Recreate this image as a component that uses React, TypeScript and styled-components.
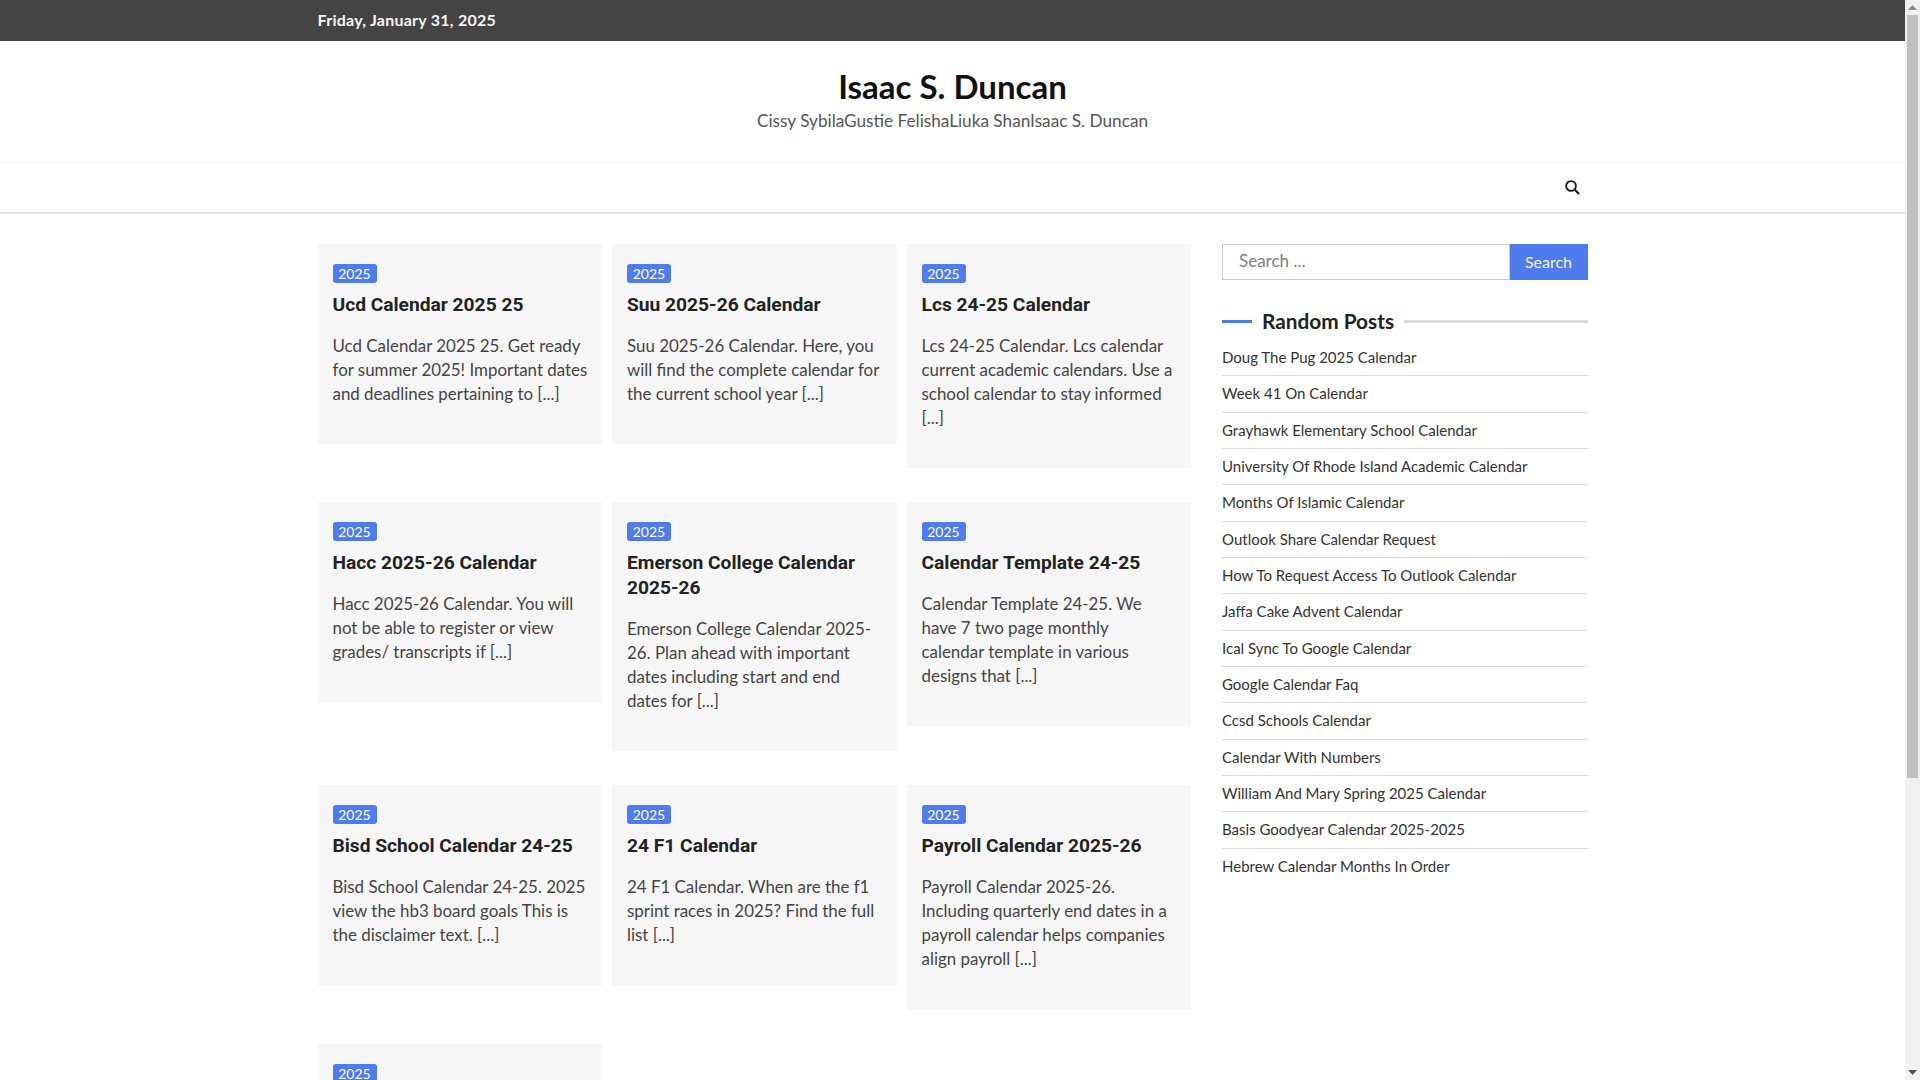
import styled, { createGlobalStyle } from "styled-components";

const posts = [
	{ title: "Ucd Calendar 2025 25", text: "Ucd Calendar 2025 25. Get ready\nfor summer 2025! Important dates\nand deadlines pertaining to [...]" },
	{ title: "Suu 2025-26 Calendar", text: "Suu 2025-26 Calendar. Here, you\nwill find the complete calendar for\nthe current school year [...]" },
	{ title: "Lcs 24-25 Calendar", text: "Lcs 24-25 Calendar. Lcs calendar\ncurrent academic calendars. Use a\nschool calendar to stay informed\n[...]" },
	{ title: "Hacc 2025-26 Calendar", text: "Hacc 2025-26 Calendar. You will\nnot be able to register or view\ngrades/ transcripts if [...]" },
	{ title: "Emerson College Calendar 2025-26", text: "Emerson College Calendar 2025-\n26. Plan ahead with important\ndates including start and end\ndates for [...]" },
	{ title: "Calendar Template 24-25", text: "Calendar Template 24-25. We\nhave 7 two page monthly\ncalendar template in various\ndesigns that [...]" },
	{ title: "Bisd School Calendar 24-25", text: "Bisd School Calendar 24-25. 2025\nview the hb3 board goals This is\nthe disclaimer text. [...]" },
	{ title: "24 F1 Calendar", text: "24 F1 Calendar. When are the f1\nsprint races in 2025? Find the full\nlist [...]" },
	{ title: "Payroll Calendar 2025-26", text: "Payroll Calendar 2025-26.\nIncluding quarterly end dates in a\npayroll calendar helps companies\nalign payroll [...]" },
];

const randomPosts = [
	"Doug The Pug 2025 Calendar",
	"Week 41 On Calendar",
	"Grayhawk Elementary School Calendar",
	"University Of Rhode Island Academic Calendar",
	"Months Of Islamic Calendar",
	"Outlook Share Calendar Request",
	"How To Request Access To Outlook Calendar",
	"Jaffa Cake Advent Calendar",
	"Ical Sync To Google Calendar",
	"Google Calendar Faq",
	"Ccsd Schools Calendar",
	"Calendar With Numbers",
	"William And Mary Spring 2025 Calendar",
	"Basis Goodyear Calendar 2025-2025",
	"Hebrew Calendar Months In Order",
];

export default function App() {
	return (
		<Shell>
			<GlobalStyle />
			<Viewport>
				<Page>
					<TopBar>
						<Container>
							<DateText>Friday, January 31, 2025</DateText>
						</Container>
					</TopBar>

					<Branding>
						<SiteTitle>Isaac S. Duncan</SiteTitle>
						<Tagline>Cissy SybilaGustie FelishaLiuka ShanIsaac S. Duncan</Tagline>
					</Branding>

					<NavBar>
						<NavInner>
							<svg width="15" height="15" viewBox="0 0 15 15" fill="none" stroke="#1a1a1a">
								<circle cx="6" cy="6" r="4.9" strokeWidth="1.9" />
								<path d="M9.8 9.8L14 14" strokeWidth="2.2" />
							</svg>
						</NavInner>
					</NavBar>

					<Content>
						<PostGrid>
							{posts.map((post) => (
								<Card key={post.title}>
									<Badge>2025</Badge>
									<CardTitle>{post.title}</CardTitle>
									<CardText>{post.text}</CardText>
								</Card>
							))}
							<Card>
								<Badge>2025</Badge>
							</Card>
						</PostGrid>

						<Sidebar>
							<SearchForm>
								<SearchInput placeholder="Search ..." />
								<SearchButton>Search</SearchButton>
							</SearchForm>

							<WidgetTitle>Random Posts</WidgetTitle>

							<PostList>
								{randomPosts.map((name) => (
									<PostItem key={name}>{name}</PostItem>
								))}
							</PostList>
						</Sidebar>
					</Content>
				</Page>
			</Viewport>

			<ScrollBar>
				<ScrollArrow>
					<svg width="9" height="5" viewBox="0 0 9 5">
						<path d="M4.5 0L9 5H0z" fill="#8a8a8a" />
					</svg>
				</ScrollArrow>
				<ScrollThumb />
				<ScrollArrow>
					<svg width="9" height="5" viewBox="0 0 9 5">
						<path d="M0 0H9L4.5 5z" fill="#505050" />
					</svg>
				</ScrollArrow>
			</ScrollBar>
		</Shell>
	);
}

const GlobalStyle = createGlobalStyle`
	body {
		margin: 0;
		background: #fff;
		font-family: Lato, "Noto Sans", sans-serif;
		color: #404040;
	}
	* {
		box-sizing: border-box;
	}
`;

const Shell = styled.div`
	display: flex;
	height: 100vh;
	overflow: hidden;
`;

const Viewport = styled.div`
	flex: 1;
	min-width: 0;
	overflow-y: auto;
	scrollbar-width: none;
`;

const Page = styled.div`
	min-height: 1486px;
`;

const ScrollBar = styled.div`
	width: 15px;
	flex-shrink: 0;
	display: flex;
	flex-direction: column;
	justify-content: space-between;
	align-items: center;
	background-color: #f1f1f1;
`;

const ScrollArrow = styled.div`
	height: 15px;
	flex-shrink: 0;
	display: flex;
	align-items: center;
	justify-content: center;
`;

const ScrollThumb = styled.div`
	width: 11px;
	height: 763px;
	margin-bottom: auto;
	background-color: #c1c1c1;
`;

const Container = styled.div`
	width: 1270px;
	margin: 0 auto;
`;

const TopBar = styled.div`
	height: 41px;
	padding-bottom: 2px;
	background-color: #444;
	display: flex;
	align-items: center;
`;

const DateText = styled.span`
	font-size: 16px;
	font-weight: 700;
	letter-spacing: 0.25px;
	color: #f5f5f5;
`;

const Branding = styled.div`
	height: 121px;
	padding-top: 25px;
	text-align: center;
`;

const SiteTitle = styled.h1`
	margin: 0;
	font-size: 33px;
	line-height: 40px;
	font-weight: 700;
	color: #111;
`;

const Tagline = styled.p`
	margin: 1px 0 0;
	font-size: 17.2px;
	line-height: 28px;
	color: #555;
`;

const NavBar = styled.div`
	height: 52px;
	border-top: 1px solid #f5f5f5;
	border-bottom: 2px solid #e4e4e4;
`;

const NavInner = styled(Container)`
	height: 100%;
	display: flex;
	justify-content: flex-end;
	align-items: center;
	padding-right: 8px;
`;

const Content = styled(Container)`
	display: flex;
	align-items: flex-start;
	gap: 31px;
	padding-top: 30px;
`;

const PostGrid = styled.div`
	display: grid;
	grid-template-columns: repeat(3, 284.5px);
	column-gap: 10px;
	row-gap: 34px;
	align-items: start;
`;

const Card = styled.article`
	background-color: #f6f6f6;
	padding: 20px 15px 38.2px;
`;

const Badge = styled.span`
	display: block;
	width: 44px;
	height: 19px;
	border-radius: 3px;
	background-color: #4e7bee;
	color: #fff;
	font-size: 14px;
	line-height: 19px;
	text-align: center;
`;

const CardTitle = styled.h2`
	margin: 9px 0 17px;
	font-family: Roboto, sans-serif;
	font-size: 19.2px;
	line-height: 25px;
	font-weight: 700;
	color: #222;
`;

const CardText = styled.p`
	margin: 0;
	font-size: 16.9px;
	line-height: 24px;
	white-space: pre;
	color: #444;
`;

const Sidebar = styled.aside`
	flex: 1;
`;

const SearchForm = styled.div`
	display: flex;
	height: 36px;
`;

const SearchInput = styled.input`
	flex: 1;
	min-width: 0;
	padding: 0 16px 3px;
	border: 1px solid #ccc;
	outline: none;
	font-family: inherit;
	font-size: 17px;
	&::placeholder {
		color: #808080;
	}
`;

const SearchButton = styled.button`
	width: 78px;
	padding: 0 0 2px;
	border: none;
	background-color: #4e7bee;
	color: #f5f5f5;
	font-family: inherit;
	font-size: 16px;
`;

const WidgetTitle = styled.h3`
	display: flex;
	align-items: center;
	gap: 10px;
	margin: 26px 0 4px;
	font-size: 20.8px;
	line-height: 30px;
	font-weight: 700;
	color: #222;
	&::before {
		content: "";
		width: 30px;
		height: 3px;
		background-color: #4e7bee;
	}
	&::after {
		content: "";
		flex: 1;
		height: 3px;
		background-color: #ddd;
	}
`;

const PostList = styled.ul`
	margin: 0;
	padding: 0;
	list-style: none;
`;

const PostItem = styled.li`
	height: 36.35px;
	line-height: 35px;
	font-size: 15px;
	color: #333;
	border-bottom: 1px solid #ddd;
	&:last-child {
		border-bottom: none;
	}
`;
